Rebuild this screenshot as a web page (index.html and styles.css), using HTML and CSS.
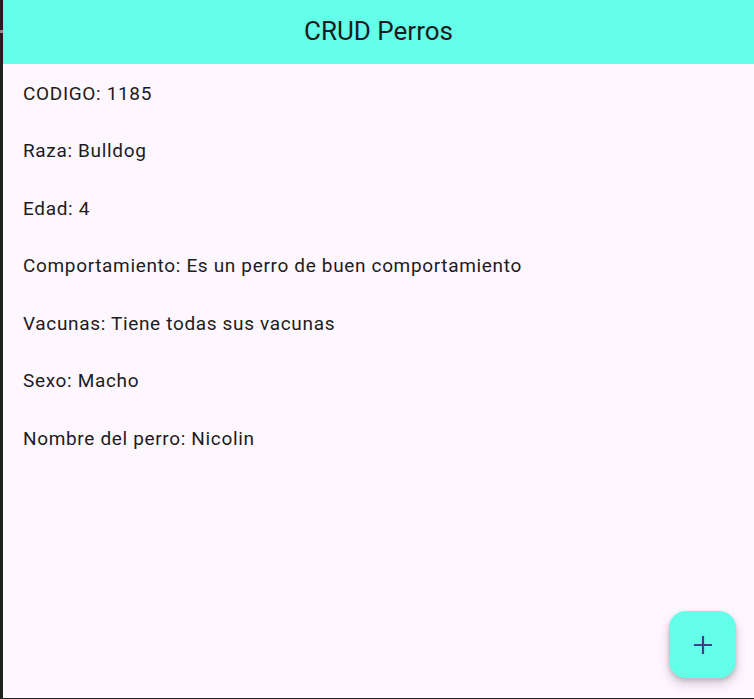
FILE: index.html
```html
<!DOCTYPE html>
<html lang="es">
<head>
<meta charset="utf-8">
<title>CRUD Perros</title>
<link rel="stylesheet" href="styles.css">
</head>
<body>
<div class="frame">
  <div class="edge"><span class="edge-mark"></span></div>
  <div class="app">
    <header class="appbar"><h1 class="title">CRUD Perros</h1></header>
    <main class="list">
      <div class="row">CODIGO: 1185</div>
      <div class="row">Raza: Bulldog</div>
      <div class="row">Edad: 4</div>
      <div class="row">Comportamiento: Es un perro de buen comportamiento</div>
      <div class="row">Vacunas: Tiene todas sus vacunas</div>
      <div class="row">Sexo: Macho</div>
      <div class="row">Nombre del perro: Nicolin</div>
    </main>
    <button class="fab" aria-label="Agregar">
      <svg width="20" height="20" viewBox="0 0 20 20"><path d="M10 1v18M1 10h18" stroke="#4F378B" stroke-width="2.2" fill="none"/></svg>
    </button>
  </div>
</div>
</body>
</html>
```
FILE: styles.css
```css
html, body {
  margin: 0;
  padding: 0;
  width: 754px;
  height: 699px;
  overflow: hidden;
  background: #1f1f1f;
}
.frame {
  display: flex;
  width: 754px;
  height: 698px;
}
.edge {
  width: 3px;
  flex: none;
  background: #202020;
  position: relative;
}
.edge-mark {
  position: absolute;
  left: 0;
  top: 30px;
  width: 3px;
  height: 3px;
  background: #8a8a8a;
}
.app {
  flex: 1;
  position: relative;
  background: #FEF7FF;
  display: flex;
  flex-direction: column;
  font-family: Roboto, "Noto Sans", sans-serif;
  color: #1D1B20;
}
.appbar {
  height: 64px;
  background: #64FFE8;
  display: flex;
  align-items: center;
  justify-content: center;
}
.title {
  margin: 0 0 3px 0;
  font-size: 26px;
  font-weight: 400;
  line-height: 32px;
  color: #1D1B20;
}
.list {
  display: flex;
  flex-direction: column;
  padding-top: 1px;
}
.row {
  height: 57.5px;
  display: flex;
  align-items: center;
  padding-left: 20px;
  font-size: 19px;
  letter-spacing: 0.66px;
  line-height: 26px;
}
.fab {
  position: absolute;
  right: 18px;
  bottom: 20px;
  width: 67px;
  height: 67px;
  border: none;
  border-radius: 17px;
  background: #64FFE8;
  box-shadow: 0 3px 4px rgba(0,0,0,0.18), 0 6px 10px 3px rgba(0,0,0,0.10);
  display: flex;
  align-items: center;
  justify-content: center;
  padding: 0;
}
```
